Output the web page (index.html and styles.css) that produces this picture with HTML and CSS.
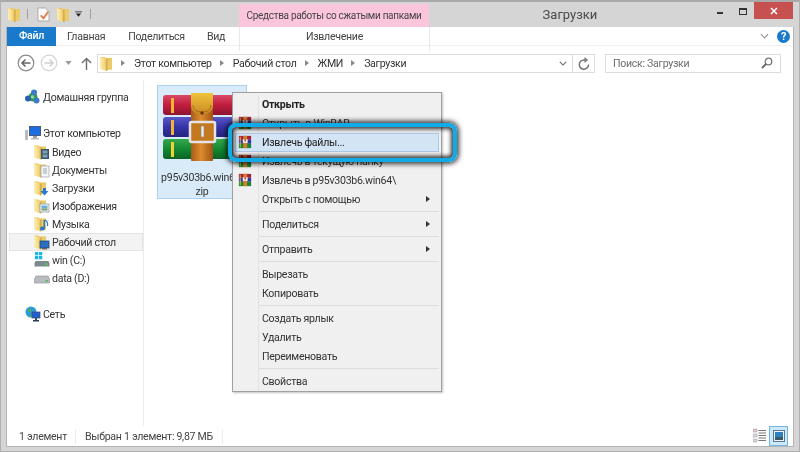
FILE: index.html
```html
<!DOCTYPE html>
<html lang="ru">
<head>
<meta charset="utf-8">
<title>Загрузки</title>
<link rel="stylesheet" href="styles.css">
</head>
<body>
<svg class="defs" width="0" height="0" aria-hidden="true">
  <defs>
    <linearGradient id="fy" x1="0" y1="0" x2="1" y2="0"><stop offset="0" stop-color="#fbeeb8"/><stop offset=".7" stop-color="#f2d679"/><stop offset="1" stop-color="#dcb04a"/></linearGradient>
    <linearGradient id="fr" x1="0" y1="0" x2="0" y2="1"><stop offset="0" stop-color="#d94a68"/><stop offset=".5" stop-color="#c11d3d"/><stop offset="1" stop-color="#8d1530"/></linearGradient>
    <linearGradient id="fb" x1="0" y1="0" x2="0" y2="1"><stop offset="0" stop-color="#5a58c8"/><stop offset=".5" stop-color="#3434a8"/><stop offset="1" stop-color="#24247c"/></linearGradient>
    <linearGradient id="fg" x1="0" y1="0" x2="0" y2="1"><stop offset="0" stop-color="#35a84f"/><stop offset=".5" stop-color="#128a32"/><stop offset="1" stop-color="#0b6124"/></linearGradient>
    <linearGradient id="belt" x1="0" y1="0" x2="1" y2="0"><stop offset="0" stop-color="#a85c18"/><stop offset=".45" stop-color="#dc8c2c"/><stop offset="1" stop-color="#a05414"/></linearGradient>
    <linearGradient id="flap" x1="0" y1="0" x2="0" y2="1"><stop offset="0" stop-color="#f0c43c"/><stop offset="1" stop-color="#c98824"/></linearGradient>
    <symbol id="folder" viewBox="0 0 12 15">
      <path d="M0 1h4.500l1 1H12v11.500H6V13L0 11.500z" fill="#e9c35c"/>
      <path d="M0 1l7 2v12l-7-2z" fill="url(#fy)"/>
      <path d="M7 3h5v10.500H7z" fill="#eccb6a"/>
      <path d="M7 3v12" stroke="#c9993a" stroke-width=".7"/>
    </symbol>
    <symbol id="rar" viewBox="0 0 16 16">
      <rect x="1" y="1" width="14" height="4.500" fill="#a81f3c"/>
      <rect x="1" y="5.500" width="14" height="4.500" fill="#35359e"/>
      <rect x="1" y="10" width="14" height="5" fill="#178534"/>
      <rect x="6" y="1" width="4.500" height="14" fill="#cf7f26"/>
      <rect x="5.500" y="5" width="5.500" height="4" fill="#f4f4f4"/>
      <rect x="7.500" y="5" width="1.500" height="2.500" fill="#a03010"/>
      <rect x="2" y="2" width="1" height="12" fill="#f0d040"/>
    </symbol>
  </defs>
</svg>

<div class="window">
  <header class="titlebar">
    <div class="qat">
      <svg class="ico-folder"><use href="#folder"/></svg>
      <span class="qat-sep"></span>
      <svg class="ico-doc" viewBox="0 0 14 16"><path d="M1 1h8l4 4v10H1z" fill="#fafafa" stroke="#a8a8a8"/><path d="M4 9l3 3 5-7" fill="none" stroke="#e07a4a" stroke-width="2"/></svg>
      <svg class="ico-folder qat-folder2"><use href="#folder"/></svg>
      <svg class="ico-caret" viewBox="0 0 8 6"><path d="M0 0h8v1H0zM1 2.500h6L4 6z" fill="#222"/></svg>
      <span class="qat-sep qat-sep-last"></span>
    </div>
    <div class="context-head">Средства работы со сжатыми папками</div>
    <div class="title">Загрузки</div>
    <div class="controls">
      <span class="ctl-min"></span>
      <span class="ctl-max"></span>
      <span class="ctl-close">
        <svg viewBox="0 0 8 8" width="8" height="8"><path d="M1 1l6 6M7 1L1 7" stroke="#fff" stroke-width="1.500"/></svg>
      </span>
    </div>
  </header>

  <div class="pane">
    <nav class="tabs">
      <span class="tab-file">Файл</span>
      <span class="tab tab-home">Главная</span>
      <span class="tab tab-share">Поделиться</span>
      <span class="tab tab-view">Вид</span>
      <span class="tab-context">Извлечение</span>
      <svg class="ribbon-chev" viewBox="0 0 10 6"><path d="M1 1l4 4 4-4" fill="none" stroke="#999" stroke-width="1.300"/></svg>
      <span class="help">?</span>
    </nav>

    <div class="addressbar">
      <svg class="nav-back" viewBox="0 0 18 18"><circle cx="9" cy="9" r="7.800" fill="#fff" stroke="#8a8a8a" stroke-width="1.200"/><path d="M13.500 9H5.500M8.500 5.500L5 9l3.500 3.500" fill="none" stroke="#666" stroke-width="1.500"/></svg>
      <svg class="nav-forward" viewBox="0 0 18 18"><circle cx="9" cy="9" r="7.800" fill="#fff" stroke="#d6d6d6" stroke-width="1.200"/><path d="M4.500 9h8M9.500 5.500L13 9l-3.500 3.500" fill="none" stroke="#cfcfcf" stroke-width="1.500"/></svg>
      <svg class="nav-drop" viewBox="0 0 8 5"><path d="M0 0h8L4 5z" fill="#9a9a9a"/></svg>
      <svg class="nav-up" viewBox="0 0 12 14"><path d="M6 14V2M1 6.500L6 1.500l5 5" fill="none" stroke="#707070" stroke-width="1.600"/></svg>
      <div class="crumbs">
        <svg class="ico-folder crumb-folder"><use href="#folder"/></svg>
        <span class="arrow"></span><span class="crumb">Этот компьютер</span>
        <span class="arrow"></span><span class="crumb">Рабочий стол</span>
        <span class="arrow"></span><span class="crumb">ЖМИ</span>
        <span class="arrow"></span><span class="crumb">Загрузки</span>
        <svg class="crumb-chev" viewBox="0 0 10 6"><path d="M1 1l4 4 4-4" fill="none" stroke="#666" stroke-width="1.300"/></svg>
        <span class="refresh">
          <svg viewBox="0 0 12 13" width="12" height="13"><path d="M10.500 7.500A4.600 4.600 0 1 1 6 3h1.500" fill="none" stroke="#777" stroke-width="1.500"/><path d="M6.500 0l3.500 3-3.500 3z" fill="#777"/></svg>
        </span>
      </div>
      <div class="search">
        <span>Поиск: Загрузки</span>
        <svg viewBox="0 0 12 12" width="12" height="12"><circle cx="7.500" cy="4.500" r="3.300" fill="none" stroke="#777" stroke-width="1.300"/><path d="M5 7l-4 4" stroke="#666" stroke-width="1.800"/></svg>
      </div>
    </div>

    <div class="main">
      <aside class="sidebar">
        <div class="nav-row lvl0">
          <svg class="ico-side" viewBox="0 0 16 16"><circle cx="8" cy="8" r="4.500" fill="#2f9a4a"/><circle cx="9" cy="3.500" r="3" fill="#3d7bc8"/><circle cx="3" cy="9.500" r="3" fill="#2a5fb0"/><circle cx="11.500" cy="11.500" r="3" fill="#3d7bc8"/><circle cx="7.500" cy="8" r="1.800" fill="#8ed89a"/></svg>
          <span>Домашняя группа</span>
        </div>
        <div class="nav-row lvl0 nav-group">
          <svg class="ico-side" viewBox="0 0 16 16"><rect x="0" y="5" width="3" height="10" fill="#b8bcc0"/><rect x="4" y="1" width="12" height="10" fill="#4a5a78"/><rect x="5" y="2" width="10" height="8" fill="#1b6fe0"/><rect x="8" y="11" width="4" height="2" fill="#9aa0a8"/><rect x="6" y="13" width="8" height="1.500" fill="#b8bcc0"/></svg>
          <span>Этот компьютер</span>
        </div>
        <div class="nav-row lvl1 nav-first">
          <svg class="ico-side" viewBox="0 0 16 16"><use href="#folder" width="12" height="16"/><rect x="7" y="5" width="8" height="10" fill="#3d5568"/><rect x="8.500" y="6.500" width="5" height="3" fill="#79a0b8"/><rect x="8.500" y="10.500" width="5" height="3" fill="#79a0b8"/></svg>
          <span>Видео</span>
        </div>
        <div class="nav-row lvl1">
          <svg class="ico-side" viewBox="0 0 16 16"><use href="#folder" width="12" height="16"/><rect x="7" y="4" width="8" height="11" fill="#f4f6f8" stroke="#a8b0b8" stroke-width=".8"/><path d="M9 7h4M9 9h4M9 11h4" stroke="#9aa4b0"/></svg>
          <span>Документы</span>
        </div>
        <div class="nav-row lvl1">
          <svg class="ico-side" viewBox="0 0 16 16"><use href="#folder" width="12" height="16"/><path d="M9 8h3v3h2.500L10.500 15.500 6.500 11H9z" fill="#2a78d0"/></svg>
          <span>Загрузки</span>
        </div>
        <div class="nav-row lvl1">
          <svg class="ico-side" viewBox="0 0 16 16"><use href="#folder" width="12" height="16"/><rect x="6" y="6" width="9" height="8" fill="#f0f4f8" stroke="#8fa0b0" stroke-width=".8"/><rect x="7.500" y="7.500" width="6" height="3" fill="#6fb0d8"/><rect x="7.500" y="10.500" width="6" height="2" fill="#7aa070"/></svg>
          <span>Изображения</span>
        </div>
        <div class="nav-row lvl1">
          <svg class="ico-side" viewBox="0 0 16 16"><use href="#folder" width="12" height="16"/><path d="M11 4v8.500a2.500 2 0 1 1-1.500-1.800V4z" fill="#2a78c8"/><path d="M11 4c2 1 3 3 2.500 6" fill="none" stroke="#2a78c8" stroke-width="1.200"/></svg>
          <span>Музыка</span>
        </div>
        <div class="nav-row lvl1 nav-active">
          <svg class="ico-side" viewBox="0 0 16 16"><use href="#folder" width="12" height="16"/><rect x="6" y="7" width="9" height="7" fill="#2a6fc0" stroke="#1c4a80" stroke-width=".8"/><rect x="8" y="14" width="5" height="1.500" fill="#666"/></svg>
          <span>Рабочий стол</span>
        </div>
        <div class="nav-row lvl1">
          <svg class="ico-side" viewBox="0 0 16 16"><rect x="1" y="0" width="3.300" height="3.300" fill="#19b6ee"/><rect x="5" y="0" width="3.300" height="3.300" fill="#19b6ee"/><rect x="1" y="4" width="3.300" height="3.300" fill="#19b6ee"/><rect x="5" y="4" width="3.300" height="3.300" fill="#19b6ee"/><path d="M1.500 9h13l1 2v3.500H.5V11z" fill="#7d8a8c"/><rect x="11" y="11.500" width="3" height="1.500" fill="#57c06a"/></svg>
          <span>win (C:)</span>
        </div>
        <div class="nav-row lvl1">
          <svg class="ico-side" viewBox="0 0 16 16"><path d="M2 6h12l1.500 3v4H.5V9z" fill="#b8bcc0" stroke="#8a8e92" stroke-width=".6"/><rect x="11" y="10" width="3" height="1.500" fill="#57c06a"/></svg>
          <span>data (D:)</span>
        </div>
        <div class="nav-row lvl0 nav-group">
          <svg class="ico-side" viewBox="0 0 16 16"><circle cx="6" cy="6" r="5.500" fill="#2f9ad8"/><path d="M3 3c2-1 4 0 3 2S2 6 3 3zM6 8c2 0 3 1 2 3H5z" fill="#4cb050"/><rect x="7" y="6" width="8" height="6" fill="#1f5fd0" stroke="#3a4a68" stroke-width=".7"/><rect x="10" y="12" width="2" height="2" fill="#3a4a68"/><rect x="8" y="14" width="6" height="1.500" fill="#2a3a58"/></svg>
          <span>Сеть</span>
        </div>
      </aside>

      <section class="files">
        <div class="file-item">
          <svg class="file-icon" viewBox="0 0 80 70">
            <rect x="2" y="3" width="76" height="20" rx="3" fill="url(#fr)"/>
            <rect x="2" y="25" width="76" height="20" rx="3" fill="url(#fb)"/>
            <rect x="2" y="47" width="76" height="20" rx="3" fill="url(#fg)"/>
            <rect x="10" y="6" width="3" height="15" fill="#f2b233"/>
            <rect x="10" y="28" width="3" height="15" fill="#f2b233"/>
            <rect x="10" y="50" width="3" height="15" fill="#f2d233"/>
            <rect x="30" y="1" width="22" height="68" rx="1" fill="url(#belt)"/>
            <path d="M30 1h22v12c0 6-4 9-11 9s-11-3-11-9z" fill="url(#flap)"/>
            <path d="M32 13c0 5 4 7 9 7s9-2 9-7" fill="none" stroke="#9a5e14" stroke-width=".8"/>
            <circle cx="41" cy="21" r="1.800" fill="#6a3a0c"/>
            <rect x="29" y="30" width="25" height="20" rx="1.500" fill="#c4791f" stroke="#e4e4e4" stroke-width="2.500"/>
            <rect x="40" y="34" width="3" height="11" rx="1" fill="#e8e8e8" stroke="#8a8a8a" stroke-width=".5"/>
          </svg>
          <div class="file-name">p95v303b6.win64.<br>zip</div>
        </div>
      </section>
    </div>

    <footer class="statusbar">
      <span class="st-count">1 элемент</span>
      <span class="st-sel">Выбран 1 элемент: 9,87 МБ</span>
      <span class="st-views">
        <svg class="view-details" viewBox="0 0 14 16"><rect x="0" y="1" width="4" height="3" fill="#e4c8c8" stroke="#999" stroke-width=".5"/><rect x="0" y="6" width="4" height="3" fill="#d8d8e8" stroke="#999" stroke-width=".5"/><rect x="0" y="11" width="4" height="3" fill="#d8d8d8" stroke="#999" stroke-width=".5"/><path d="M5.500 2.500H13M5.500 5H13M5.500 7.500H13M5.500 10H13M5.500 12.500H13" stroke="#777"/></svg>
        <span class="view-large">
          <svg viewBox="0 0 12 12" width="12" height="12"><rect x=".5" y=".5" width="11" height="11" fill="#eef3f7" stroke="#5a7a94"/><rect x="2" y="2" width="8" height="5" fill="#2f7fc0"/><rect x="2" y="7" width="8" height="3" fill="#3a5a6a"/></svg>
        </span>
      </span>
    </footer>
  </div>

  <div class="menu">
    <div class="menu-item menu-bold"><span>Открыть</span></div>
    <div class="menu-item"><svg class="menu-icon"><use href="#rar"/></svg><span>Открыть в WinRAR</span></div>
    <div class="menu-item menu-current"><svg class="menu-icon"><use href="#rar"/></svg><span>Извлечь файлы...</span></div>
    <div class="menu-item"><svg class="menu-icon"><use href="#rar"/></svg><span>Извлечь в текущую папку</span></div>
    <div class="menu-item"><svg class="menu-icon"><use href="#rar"/></svg><span>Извлечь в p95v303b6.win64\</span></div>
    <div class="menu-item menu-sub"><span>Открыть с помощью</span></div>
    <div class="menu-sep"></div>
    <div class="menu-item menu-sub"><span>Поделиться</span></div>
    <div class="menu-sep"></div>
    <div class="menu-item menu-sub"><span>Отправить</span></div>
    <div class="menu-sep"></div>
    <div class="menu-item"><span>Вырезать</span></div>
    <div class="menu-item"><span>Копировать</span></div>
    <div class="menu-sep"></div>
    <div class="menu-item"><span>Создать ярлык</span></div>
    <div class="menu-item"><span>Удалить</span></div>
    <div class="menu-item"><span>Переименовать</span></div>
    <div class="menu-sep"></div>
    <div class="menu-item"><span>Свойства</span></div>
    <div class="callout"></div>
  </div>
</div>
</body>
</html>
```
FILE: styles.css
```css
* { box-sizing: border-box; }
html, body { margin: 0; padding: 0; }
body { width: 800px; height: 452px; overflow: hidden; background: #d4d4d4; font-family: Roboto, "Open Sans", sans-serif; font-size: 10.6px; letter-spacing: -.3px; color: #333; }
.defs { position: absolute; }
.window { position: relative; width: 800px; height: 452px; display: flex; flex-direction: column; background: #d5d5d5; border: 1px solid #b0b0b0; border-top: 2px solid #a9a9a9; filter: blur(.45px); }

.titlebar { height: 25px; flex: none; display: flex; align-items: stretch; padding-left: 6px; }
.qat { width: 232px; flex: none; display: flex; align-items: center; padding-left: 1px; padding-bottom: 1px; }
.ico-folder { width: 12px; height: 15px; flex: none; }
.qat-sep { width: 1px; height: 10px; background: #a0a0a0; margin-left: 7px; }
.ico-doc { width: 13px; height: 15px; margin-left: 9px; }
.qat-folder2 { margin-left: 7px; }
.ico-caret { width: 7px; height: 6px; margin-left: 6px; }
.qat-sep-last { margin-left: 8px; }
.context-head { width: 190px; height: 23px; margin-top: 2px; flex: none; background: #fbc6dc; text-align: center; font-size: 10px; line-height: 23px; white-space: nowrap; color: #444; }
.title { flex: 1; text-align: center; font-size: 13px; letter-spacing: 0; line-height: 26px; color: #4a4a4a; padding-right: 6px; }
.controls { display: flex; width: 82px; flex: none; }
.ctl-min { width: 6px; height: 2px; background: #333; margin: 10px 0 0 0; flex: none; }
.ctl-max { width: 8px; height: 7px; border: 1px solid #333; border-top-width: 2px; margin: 6px 0 0 16px; flex: none; }
.ctl-close { width: 39px; height: 17px; margin-left: 7px; background: #c75050; display: flex; align-items: center; justify-content: center; flex: none; }

.pane { flex: 1; margin: 0 5px 4px 5px; display: flex; flex-direction: column; min-height: 0; background: #fff; border: 1px solid #b4b4b4; border-top: 0; }

.tabs { height: 19px; flex: none; display: flex; align-items: center; position: relative; border-bottom: 1px solid #f0f0f0; }
.tab-file { width: 49px; height: 19px; background: #1979ca; color: #fff; text-align: center; line-height: 18px; font-weight: 500; }
.tab { color: #444; }
.tab-home { margin-left: 11px; }
.tab-share { margin-left: 23px; }
.tab-view { margin-left: 22px; }
.tab-context { position: absolute; left: 232px; top: 0; width: 191px; height: 24px; text-align: center; line-height: 19px; border-left: 1px solid #e8e8e8; border-right: 1px solid #e8e8e8; color: #444; }
.ribbon-chev { width: 9px; height: 6px; margin-left: auto; }
.help { width: 13px; height: 13px; margin: 0 3px 0 8px; border-radius: 50%; background: #1979ca; color: #fff; font-weight: 700; font-size: 11px; line-height: 13px; text-align: center; }

.addressbar { height: 34px; flex: none; display: flex; align-items: center; padding-left: 10px; }
.nav-back { width: 18px; height: 18px; flex: none; }
.nav-forward { width: 18px; height: 18px; flex: none; margin-left: 5px; }
.nav-drop { width: 7px; height: 4px; flex: none; margin-left: 7px; }
.nav-up { width: 11px; height: 13px; flex: none; margin-left: 9px; }
.crumbs { width: 498px; height: 19px; flex: none; margin-left: 5px; border: 1px solid #dcdcdc; display: flex; align-items: center; padding-left: 2px; position: relative; color: #333; }
.crumb-folder { margin-right: 9px; }
.arrow { width: 0; height: 0; border-left: 4px solid #888; border-top: 3.500px solid transparent; border-bottom: 3.500px solid transparent; margin-right: 9px; }
.crumb { margin-right: 8px; }
.crumb-chev { width: 8px; height: 5px; margin-left: auto; margin-right: 5px; }
.refresh { width: 22px; height: 17px; border-left: 1px solid #dcdcdc; display: flex; align-items: center; justify-content: center; }
.search { width: 176px; height: 19px; flex: none; margin-left: 10px; border: 1px solid #dcdcdc; display: flex; align-items: center; justify-content: space-between; padding: 0 7px; color: #6d6d6d; }

.main { flex: 1; min-height: 0; display: flex; }
.sidebar { width: 137px; flex: none; padding: 8px 0 0 2px; border-right: 1px solid #ececec; }
.nav-row { height: 18px; display: flex; align-items: center; color: #333; width: 134px; border: 1px solid transparent; }
.lvl0 { padding-left: 15px; }
.lvl1 { padding-left: 24px; }
.nav-group { margin-top: 18px; }
.nav-first { margin-top: 1px; }
.nav-active { background: #f3f3f3; border-color: #e4e4e4; }
.ico-side { width: 16px; height: 16px; flex: none; margin-right: 2px; }
.files { flex: 1; padding: 5px 0 0 13px; }
.file-item { width: 90px; height: 114px; background: #d9ebf9; border: 1px solid #a9d2f2; display: flex; flex-direction: column; align-items: center; padding-top: 6px; }
.file-icon { width: 80px; height: 70px; flex: none; margin-right: 2px; }
.file-name { margin-top: 9px; text-align: center; line-height: 14px; white-space: nowrap; color: #333; }

.statusbar { height: 20px; flex: none; display: flex; align-items: center; position: relative; color: #444; }
.st-count { width: 69px; padding-left: 12px; height: 15px; line-height: 15px; border-right: 1px solid #ececec; }
.st-sel { padding: 0 9px; height: 15px; line-height: 15px; border-right: 1px solid #ececec; }
.st-views { margin-left: auto; display: flex; align-items: center; margin-right: 5px; }
.view-details { width: 14px; height: 16px; margin-right: 2px; }
.view-large { width: 19px; height: 20px; background: #cfe8f8; border: 1px solid #6fb6e4; display: flex; align-items: center; justify-content: center; }

.menu { position: absolute; left: 231px; top: 90px; width: 210px; height: 300px; background: #f0f0f0; border: 1px solid #a0a0a0; padding: 2px 2px 0 2px; box-shadow: 1px 1px 2px rgba(0,0,0,.25); }
.menu::before { content: ""; position: absolute; left: 25px; top: 2px; bottom: 1px; width: 1px; background: #e2e2e2; }
.menu-item { height: 19px; display: flex; align-items: center; padding-left: 27px; position: relative; color: #333; }
.menu-bold { font-weight: 700; color: #222; }
.menu-icon { width: 14px; height: 14px; position: absolute; left: 3px; top: 2px; }
.menu-sub::after { content: ""; position: absolute; right: 9px; top: 6px; border-left: 4px solid #333; border-top: 3.500px solid transparent; border-bottom: 3.500px solid transparent; }
.menu-sep { height: 6px; margin-left: 24px; position: relative; }
.menu-sep::after { content: ""; position: absolute; left: 0; right: 0; top: 2px; height: 1px; background: #dcdcdc; }
.menu-current { background: #d3e5f5; outline: 1px solid #a9c9e8; outline-offset: -1px; color: #222; }
.callout { position: absolute; left: -5px; top: 30px; width: 229px; height: 39px; border: 4px solid #10aae6; border-radius: 8px; box-shadow: 0 0 5px 2px rgba(0,0,0,.75), inset 0 0 4px 2px rgba(0,0,0,.8); }
```
